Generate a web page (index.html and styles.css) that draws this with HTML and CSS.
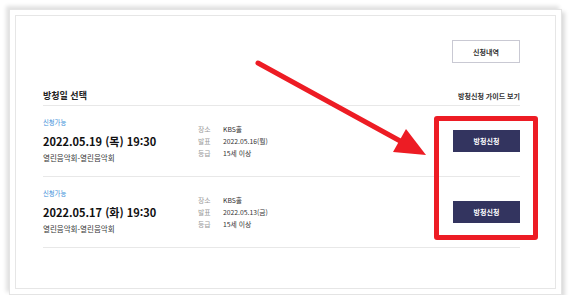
FILE: index.html
```html
<!DOCTYPE html>
<html lang="ko">
<head>
    <meta charset="UTF-8">
    <meta name="viewport" content="width=device-width, initial-scale=1.0">
    <title>방청일 선택</title>
    <link rel="stylesheet" href="styles.css">
</head>
<body>
    <!-- Outer frame of the captured page -->
    <div class="frame">
        <div class="panel">
            <!-- Top actions -->
            <div class="top-actions">
                <button class="btn-outline">신청내역</button>
            </div>

            <!-- Section heading -->
            <div class="section-head">
                <h2 class="section-title">방청일 선택</h2>
                <a class="guide-link" href="#">방청신청 가이드 보기</a>
            </div>

            <!-- Date rows -->
            <div class="show-row">
                <div class="show-main">
                    <div class="status">신청가능</div>
                    <div class="show-date">2022.05.19 (목) 19:30</div>
                    <div class="show-name">열린음악회-열린음악회</div>
                </div>
                <dl class="show-info">
                    <dt>장소</dt><dd>KBS홀</dd>
                    <dt>발표</dt><dd>2022.05.16(월)</dd>
                    <dt>등급</dt><dd>15세 이상</dd>
                </dl>
                <button class="btn-apply">방청신청</button>
            </div>

            <div class="show-row">
                <div class="show-main">
                    <div class="status">신청가능</div>
                    <div class="show-date">2022.05.17 (화) 19:30</div>
                    <div class="show-name">열린음악회-열린음악회</div>
                </div>
                <dl class="show-info">
                    <dt>장소</dt><dd>KBS홀</dd>
                    <dt>발표</dt><dd>2022.05.13(금)</dd>
                    <dt>등급</dt><dd>15세 이상</dd>
                </dl>
                <button class="btn-apply">방청신청</button>
            </div>
        </div>
    </div>

    <!-- Annotation: red arrow and highlight box -->
    <svg class="annotation" width="572" height="305" viewBox="0 0 572 305">
        <line x1="258" y1="63" x2="402" y2="142" stroke="#ed1c24" stroke-width="5" stroke-linecap="round"/>
        <polygon points="426,155 393,152 406,129" fill="#ed1c24"/>
    </svg>
    <div class="highlight"></div>
</body>
</html>
```

FILE: styles.css
```css
/* Page */
body {
    margin: 0;
    background-color: #ffffff;
    font-family: "Noto Sans CJK KR", "Noto Sans", sans-serif;
    color: #222;
}

/* Outer frame with paper shadow */
.frame {
    width: 541px;
    height: 274px;
    margin: 9px 0 0 9px;
    padding: 5px;
    border: 1px solid #e4e4e4;
    background-color: #fff;
    box-shadow: -3px -3px 4px rgba(0,0,0,0.12), 3px 3px 4px rgba(0,0,0,0.14);
}

/* Inner panel */
.panel {
    height: 100%;
    box-sizing: border-box;
    border: 1px solid #e6e6e6;
    padding: 24px 35px 0 27px;
}

/* Top right button */
.top-actions {
    display: flex;
    justify-content: flex-end;
}

.btn-outline {
    width: 68px;
    height: 23px;
    padding: 0;
    border: 1px solid #c9c9d3;
    background-color: #fff;
    font-family: inherit;
    font-size: 7px;
    font-weight: 700;
    color: #333;
}

/* Heading row */
.section-head {
    display: flex;
    justify-content: space-between;
    align-items: center;
    margin-top: 26px;
    padding-bottom: 2px;
    border-bottom: 1px solid #e8e8e8;
}

.section-title {
    margin: 0;
    font-size: 9px;
    line-height: 14px;
    font-weight: 700;
}

.guide-link {
    font-size: 7px;
    font-weight: 700;
    color: #333;
    text-decoration: none;
}

/* One date row */
.show-row {
    display: flex;
    align-items: center;
    height: 70px;
    border-bottom: 1px solid #e8e8e8;
}

.show-main {
    width: 155px;
}

.status {
    font-size: 6.3px;
    line-height: 10px;
    color: #3a8fd9;
    margin-bottom: 4px;
}

.show-date {
    font-size: 11px;
    line-height: 18px;
    font-weight: 700;
    color: #111;
}

.show-name {
    margin-top: 2px;
    font-size: 7.5px;
    line-height: 12px;
    color: #333;
}

/* Place / announce / rating */
.show-info {
    display: grid;
    grid-template-columns: 25px auto;
    margin: 0;
    font-size: 6.8px;
    line-height: 12px;
}

.show-info dt {
    color: #999;
}

.show-info dd {
    margin: 0;
    color: #333;
}

.btn-apply {
    width: 67px;
    height: 22px;
    margin-left: auto;
    padding: 0;
    border: none;
    background-color: #33345f;
    color: #fff;
    font-family: inherit;
    font-size: 7px;
    font-weight: 700;
}

/* Annotation overlays */
.annotation {
    position: absolute;
    left: 0;
    top: 0;
}

.highlight {
    position: absolute;
    left: 434px;
    top: 116px;
    width: 94px;
    height: 114px;
    border: 5px solid #ed1c24;
    border-radius: 3px;
}
```
